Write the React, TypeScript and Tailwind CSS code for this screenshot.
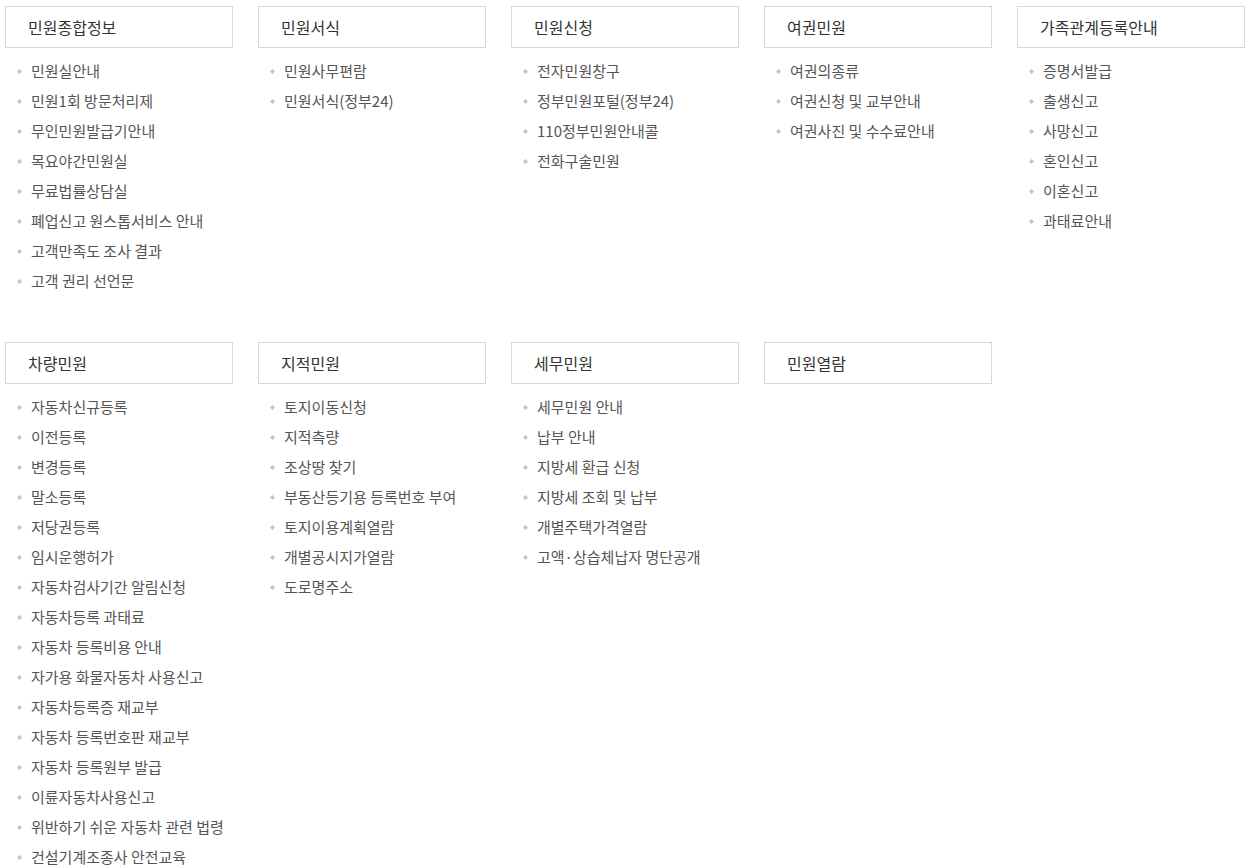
const rows: { title: string; items: string[] }[][] = [
  [
    {
      title: '민원종합정보',
      items: [
        '민원실안내',
        '민원1회 방문처리제',
        '무인민원발급기안내',
        '목요야간민원실',
        '무료법률상담실',
        '폐업신고 원스톱서비스 안내',
        '고객만족도 조사 결과',
        '고객 권리 선언문',
      ],
    },
    { title: '민원서식', items: ['민원사무편람', '민원서식(정부24)'] },
    { title: '민원신청', items: ['전자민원창구', '정부민원포털(정부24)', '110정부민원안내콜', '전화구술민원'] },
    { title: '여권민원', items: ['여권의종류', '여권신청 및 교부안내', '여권사진 및 수수료안내'] },
    { title: '가족관계등록안내', items: ['증명서발급', '출생신고', '사망신고', '혼인신고', '이혼신고', '과태료안내'] },
  ],
  [
    {
      title: '차량민원',
      items: [
        '자동차신규등록',
        '이전등록',
        '변경등록',
        '말소등록',
        '저당권등록',
        '임시운행허가',
        '자동차검사기간 알림신청',
        '자동차등록 과태료',
        '자동차 등록비용 안내',
        '자가용 화물자동차 사용신고',
        '자동차등록증 재교부',
        '자동차 등록번호판 재교부',
        '자동차 등록원부 발급',
        '이륜자동차사용신고',
        '위반하기 쉬운 자동차 관련 법령',
        '건설기계조종사 안전교육',
      ],
    },
    {
      title: '지적민원',
      items: ['토지이동신청', '지적측량', '조상땅 찾기', '부동산등기용 등록번호 부여', '토지이용계획열람', '개별공시지가열람', '도로명주소'],
    },
    {
      title: '세무민원',
      items: ['세무민원 안내', '납부 안내', '지방세 환급 신청', '지방세 조회 및 납부', '개별주택가격열람', '고액·상습체납자 명단공개'],
    },
    { title: '민원열람', items: [] },
  ],
]

function Bullet() {
  return (
    <svg width="5" height="5" viewBox="0 0 5 5" className="mr-[9px] ml-[12px] shrink-0">
      <path d="M2.5 0 L5 2.5 L2.5 5 L0 2.5 Z" fill="#c4c4c4" />
    </svg>
  )
}

export default function App() {
  return (
    <div
      className="min-h-screen bg-white pt-[6px] pl-[5px]"
      style={{ fontFamily: '"Noto Sans CJK KR", "Noto Sans", sans-serif' }}
    >
      {rows.map((row, i) => (
        <div key={i} className="grid grid-cols-[repeat(5,228px)] gap-x-[25px] pb-[46px]">
          {row.map((sec) => (
            <div key={sec.title}>
              <div className="flex h-[42px] items-center border border-[#d8d8d8] pl-[22px] text-[16px] text-[#333]">
                {sec.title}
              </div>
              <ul className="pt-[8px]">
                {sec.items.map((it) => (
                  <li key={it} className="flex h-[30px] items-center text-[15px] text-[#555]">
                    <Bullet />
                    <span>{it}</span>
                  </li>
                ))}
              </ul>
            </div>
          ))}
        </div>
      ))}
    </div>
  )
}
